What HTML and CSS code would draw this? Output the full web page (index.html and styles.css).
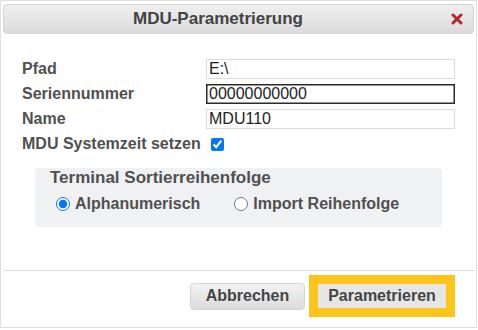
FILE: index.html
```html
<!DOCTYPE html>
<html lang="de">
<head>
    <meta charset="UTF-8">
    <title>MDU-Parametrierung</title>
    <link rel="stylesheet" href="styles.css">
</head>
<body>
    <div class="dialog">
        <div class="titlebar">
            <span class="title">MDU-Parametrierung</span>
            <span class="close">
                <svg width="12" height="12" viewBox="0 0 12 12">
                    <path d="M2 2 L10 10 M10 2 L2 10" stroke="#b3262f" stroke-width="3" stroke-linecap="round"/>
                </svg>
            </span>
        </div>

        <div class="content">
            <div class="form-grid">
                <label class="field-label" for="pfad">Pfad</label>
                <input class="field" id="pfad" type="text" value="E:\">

                <label class="field-label" for="serial">Seriennummer</label>
                <input class="field focused" id="serial" type="text" value="00000000000">

                <label class="field-label" for="name">Name</label>
                <input class="field" id="name" type="text" value="MDU110">

                <label class="field-label" for="systime">MDU Systemzeit setzen</label>
                <div class="check-cell"><input class="check" id="systime" type="checkbox" checked></div>
            </div>

            <div class="group">
                <div class="group-title">Terminal Sortierreihenfolge</div>
                <div class="radios">
                    <label class="radio-label"><input type="radio" name="sort" checked> Alphanumerisch</label>
                    <label class="radio-label"><input type="radio" name="sort"> Import Reihenfolge</label>
                </div>
            </div>
        </div>

        <div class="footer">
            <button class="btn btn-cancel">Abbrechen</button>
            <span class="highlight">
                <button class="btn btn-primary">Parametrieren</button>
            </span>
        </div>
    </div>
</body>
</html>
```

FILE: styles.css
```css
body {
    margin: 0;
    font-family: "Liberation Sans", Arial, sans-serif;
    background-color: #fff;
    color: #505050;
}
.dialog {
    width: 477px;
    height: 328px;
    box-sizing: border-box;
    border: 1px solid #e0e0e0;
    padding: 3px 2px 0 2px;
    background-color: #fff;
}
.titlebar {
    display: flex;
    align-items: center;
    height: 30px;
    box-sizing: border-box;
    border: 1px solid #d4d4d4;
    border-radius: 4px;
    background: linear-gradient(#efefef, #dbdbdb);
}
.title {
    width: 428px;
    text-align: center;
    font-size: 17px;
    font-weight: bold;
    color: #444;
}
.close {
    margin-left: auto;
    margin-right: 10px;
    width: 12px;
    height: 12px;
    display: flex;
}
.content {
    padding: 25px 19px 43px 19px;
}
.form-grid {
    display: grid;
    grid-template-columns: 184px 1fr;
    grid-auto-rows: 20px;
    row-gap: 5px;
    align-items: center;
}
.field-label {
    font-size: 16px;
    font-weight: bold;
    color: #505050;
}
.field {
    height: 20px;
    box-sizing: border-box;
    border: 1px solid #dcdcdc;
    padding: 0 2px;
    margin: 0;
    font-family: "Liberation Sans", Arial, sans-serif;
    font-size: 16px;
    color: #222;
    outline: none;
}
.field.focused {
    border-color: #2a2a2a;
    box-shadow: inset 0 0 0 0.5px #2a2a2a;
}
.check-cell {
    display: flex;
    align-items: center;
}
.check {
    width: 13px;
    height: 13px;
    margin: 0 0 0 5px;
}
.group {
    margin: 24px 13px 0 13px;
    padding: 0 0 13px 0;
    background-color: #f0f1f3;
    border-radius: 4px;
}
.group-title {
    margin: -10px 0 0 15px;
    line-height: 20px;
    font-size: 17px;
    font-weight: bold;
    color: #505050;
}
.radios {
    display: flex;
    gap: 34px;
    margin-top: 6px;
    padding-left: 21px;
    height: 20px;
    align-items: center;
}
.radio-label {
    display: flex;
    align-items: center;
    gap: 5px;
    font-size: 16px;
    font-weight: bold;
    color: #505050;
}
.radio-label input {
    width: 14px;
    height: 14px;
    margin: 0;
}
.footer {
    display: flex;
    justify-content: flex-end;
    align-items: center;
    gap: 4px;
    border-top: 1px solid #dcdcdc;
    padding: 4px 19px 0 0;
}
.btn {
    height: 27px;
    border: 1px solid #d4d4d4;
    border-radius: 4px;
    background: linear-gradient(#f2f2f2, #dcdcdc);
    font-family: "Liberation Sans", Arial, sans-serif;
    font-size: 16px;
    font-weight: bold;
    color: #454545;
    cursor: pointer;
}
.btn-cancel {
    width: 115px;
}
.highlight {
    display: flex;
    padding: 9px;
    background-color: #fcc51c;
}
.btn-primary {
    display: block;
    width: 128px;
    height: 24px;
    border: none;
    border-radius: 0;
    background: #e6e6e6;
}
```
